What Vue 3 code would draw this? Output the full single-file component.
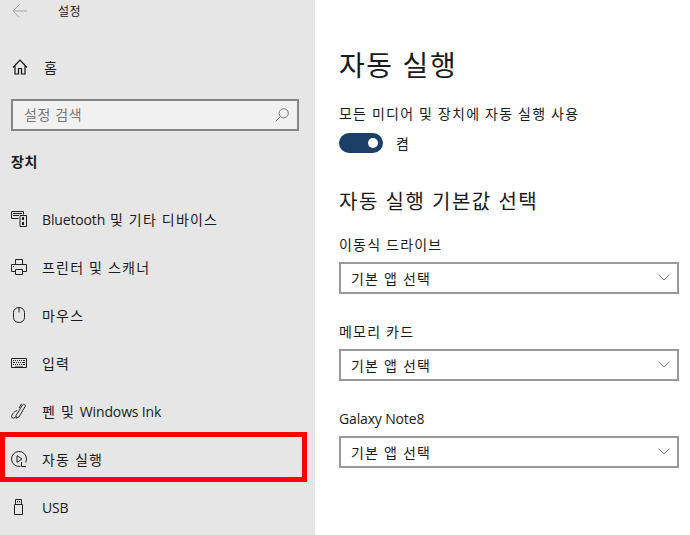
<template>
  <div class="settings">
    <aside class="sidebar">
      <div class="titlebar">
        <svg class="back" width="16" height="16" viewBox="0 0 16 16"><path d="M15 8H1M7.500 1.500 1 8l6.500 6.500" fill="none" stroke="#a3a3a3" stroke-width="1" /></svg>
        <span class="app-name">설정</span>
      </div>
      <div class="home">
        <svg class="icon" width="16" height="16" viewBox="0 0 16 16"><path d="M1 8.500 8 1.200l7 7.300M3 7v8h3.500v-5.500h3V15H13V7" fill="none" stroke="#111" stroke-width="1.200" /></svg>
        <span class="kr">홈</span>
      </div>
      <div class="search">
        <span>설정 검색</span>
        <svg width="14" height="14" viewBox="0 0 14 14"><circle cx="8.700" cy="5.300" r="4.600" fill="none" stroke="#777" /><path d="M5.400 8.600.6 13.400" stroke="#777" /></svg>
      </div>
      <div class="group">장치</div>
      <nav class="nav">
        <div v-for="item in navItems" :key="item.label" class="nav-row">
          <svg class="icon" width="16" height="16" viewBox="0 0 16 16" fill="none" stroke="#222" stroke-width="1">
            <path v-for="d in item.paths" :key="d" :d="d" />
            <path v-if="item.solid" :d="item.solid" fill="#222" stroke="none" />
          </svg>
          <span>
            <span v-for="run in runs(item.label)" :key="run.text" :class="run.cls">{{ run.text }}</span>
          </span>
        </div>
      </nav>
      <div class="highlight"></div>
    </aside>
    <main class="content">
      <h1>자동 실행</h1>
      <div class="caption kr toggle-label">모든 미디어 및 장치에 자동 실행 사용</div>
      <div class="toggle-row">
        <span class="toggle"><span class="knob"></span></span>
        <span class="kr">켬</span>
      </div>
      <h2>자동 실행 기본값 선택</h2>
      <div v-for="field in fields" :key="field" class="field">
        <div class="caption">
          <span v-for="run in runs(field)" :key="run.text" :class="run.cls">{{ run.text }}</span>
        </div>
        <div class="select">
          <span class="kr">기본 앱 선택</span>
          <svg width="12" height="7" viewBox="0 0 12 7"><path d="M.5.5 6 6l5.500-5.500" fill="none" stroke="#777" /></svg>
        </div>
      </div>
    </main>
  </div>
</template>

<script setup>
const navItems = [
  {
    label: 'Bluetooth 및 기타 디바이스',
    paths: ['M7.500 7.500h-7v-7h12v3', 'M9 4.500h6.500v11H9z'],
    solid: 'M2 2h9v1H2zM2 4h6v1H2zM11 6h2v3h-2zM11 11h2v3h-2z'
  },
  { label: '프린터 및 스캐너', paths: ['M4.500 5.500v-5h7v5', 'M4.500 12.500H.5v-7h15v7h-4', 'M4.500 10.500h7v5h-7z', 'M2 7.500h1'] },
  { label: '마우스', paths: ['M2.500 5.500a5.500 5 0 0 1 11 0v5a5.500 5 0 0 1-11 0z', 'M8 .5v5'] },
  {
    label: '입력',
    paths: ['M.5 3.500h15v9H.5z'],
    solid: 'M2 5h1v1H2zM4 5h1v1H4zM6 5h1v1H6zM8 5h1v1H8zM10 5h1v1h-1zM12 5h2v1h-2zM2 7h2v1H2zM5 7h1v1H5zM7 7h1v1H7zM9 7h1v1H9zM11 7h3v1h-3zM2 9h1v1H2zM4 9h1v1H4zM6 9h1v1H6zM8 9h1v1H8zM10 9h1v1h-1zM12 9h2v1h-2zM4 11h8v.6H4z'
  },
  {
    label: '펜 및 Windows Ink',
    paths: ['M5 12.500 11.500 2c1-1.500 3.500-.5 2.800 1.200L7.800 14 5 15.200z', 'M10.500 .8 8 5', 'M6 7.500C2.500 9 .2 12 .7 14c.5 1.800 3 1.500 4.300-.5']
  },
  {
    label: '자동 실행',
    paths: ['M9.500 15.300A7.500 7.500 0 1 1 15.500 8c0 1.300-.3 2.500-.9 3.500', 'M6 4.700v6.600L11 8z', 'M10.500 11v4.500h4.500'],
  },
  { label: 'USB', paths: ['M3.500 5.500h8v10h-8z', 'M4.500 5.500v-5h6v5'], solid: 'M6 2h1v1.500H6zM8 2h1v1.500H8z' }
]

const fields = ['이동식 드라이브', '메모리 카드', 'Galaxy Note8']

// 라틴 문자는 자간을 따로 줘야 해서 문자 종류별로 나눔
const runs = (text) =>
  text
    .split(/([A-Za-z0-9]+(?: [A-Za-z0-9]+)*)/)
    .filter(Boolean)
    .map((part) => ({ text: part, cls: /[A-Za-z0-9]/.test(part) ? 'latin' : 'kr' }))
</script>

<style>
html, body {
  margin: 0;
  background: #fff;
}
</style>

<style scoped>
.settings {
  display: flex;
  width: 690px;
  height: 535px;
  overflow: hidden;
  font-family: "Open Sans", "Noto Sans CJK KR", sans-serif;
  font-size: 14px;
  color: #1a1a1a;
}

.kr {
  letter-spacing: 1.2px;
}

.latin {
  letter-spacing: -0.15px;
}

.sidebar {
  position: relative;
  box-sizing: border-box;
  width: 315px;
  flex: none;
  background: #e6e6e6;
}

.titlebar {
  display: flex;
  align-items: center;
  height: 22px;
  padding-left: 12px;
}

.back {
  margin-right: 30px;
}

.app-name {
  font-size: 12px;
  letter-spacing: 0.5px;
}

.home {
  display: flex;
  align-items: center;
  gap: 16px;
  height: 24px;
  margin-top: 33px;
  padding-left: 12px;
}

.search {
  display: flex;
  align-items: center;
  justify-content: space-between;
  box-sizing: border-box;
  width: 288px;
  height: 32px;
  margin: 20px 0 0 11px;
  padding: 0 8px 3px 11px;
  border: 2px solid #858585;
  background: #f1f1f1;
  color: #777;
  letter-spacing: 0.6px;
}

.search svg {
  margin-top: 3px;
}

.group {
  margin: 20px 0 0 11px;
  font-weight: 700;
  line-height: 22px;
  letter-spacing: 0.5px;
}

.nav {
  margin-top: 22px;
}

.nav-row {
  display: flex;
  align-items: center;
  gap: 15px;
  height: 48px;
  padding-left: 11px;
}

.icon {
  flex: none;
}

.highlight {
  position: absolute;
  left: 0;
  top: 432px;
  width: 307px;
  height: 50px;
  box-sizing: border-box;
  border: 5px solid #f00;
}

.content {
  flex: 1;
  padding: 0 11px 0 24px;
}

h1 {
  margin: 44px 0 0;
  font-size: 28px;
  font-weight: 400;
  line-height: 42px;
  letter-spacing: 1.6px;
}

.caption {
  line-height: 20px;
}

.toggle-label {
  margin-top: 18px;
}

.toggle-row {
  display: flex;
  align-items: center;
  gap: 13px;
  height: 20px;
  margin-top: 9px;
}

.toggle {
  display: flex;
  align-items: center;
  justify-content: flex-end;
  box-sizing: border-box;
  width: 44px;
  height: 20px;
  padding-right: 5px;
  border-radius: 10px;
  background: #1b3f66;
}

.knob {
  width: 10px;
  height: 10px;
  border-radius: 50%;
  background: #fff;
}

h2 {
  margin: 35px 0 0;
  font-size: 20px;
  font-weight: 400;
  line-height: 28px;
  letter-spacing: 1.5px;
}

.field {
  margin-top: 19px;
}

.field + .field {
  margin-top: 28px;
}

.select {
  display: flex;
  align-items: center;
  justify-content: space-between;
  box-sizing: border-box;
  height: 32px;
  margin-top: 7px;
  padding: 0 7px 1px 10px;
  border: 2px solid #999;
}
</style>
